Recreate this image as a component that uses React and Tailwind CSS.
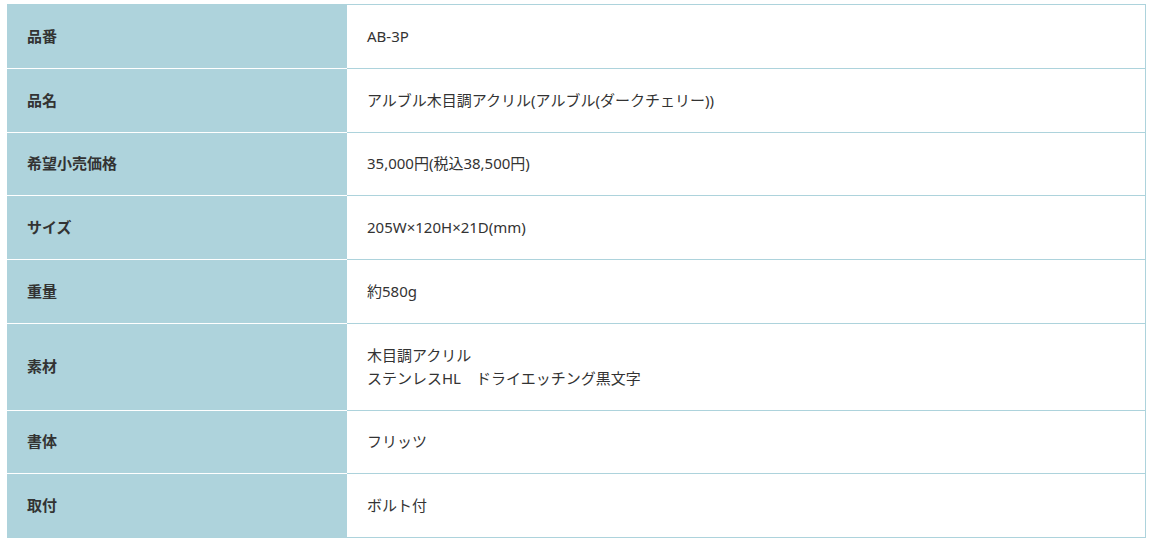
import React from "react";

const rows = [
    { label: "品番", value: ["AB-3P"] },
    { label: "品名", value: ["アルブル木目調アクリル(アルブル(ダークチェリー))"] },
    { label: "希望小売価格", value: ["35,000円(税込38,500円)"] },
    { label: "サイズ", value: ["205W×120H×21D(mm)"] },
    { label: "重量", value: ["約580g"] },
    { label: "素材", value: ["木目調アクリル", "ステンレスHL　ドライエッチング黒文字"] },
    { label: "書体", value: ["フリッツ"] },
    { label: "取付", value: ["ボルト付"] },
];

export default function App() {
    return (
        <div
            className="bg-white min-h-[543px] pt-[4px] pl-[7px] text-[15px] text-[#333]"
            style={{ fontFamily: '"Noto Sans", "Noto Sans CJK JP", sans-serif' }}
        >
            <div className="w-[1139px] border-t border-[#add3dc]">
                {rows.map((r, i) => (
                    <div key={r.label} className="flex">
                        <div
                            className={
                                "w-[340px] shrink-0 bg-[#aed3dc] px-5 py-[19.875px] leading-[23px] font-bold flex items-center " +
                                (i === rows.length - 1 ? "border-b border-[#add3dc]" : "border-b border-white")
                            }
                        >
                            {r.label}
                        </div>
                        <div className="flex-1 px-5 py-[19.875px] leading-[23px] border-b border-r border-[#add3dc]">
                            {r.value.map((v) => (
                                <div key={v} className="whitespace-pre">{v}</div>
                            ))}
                        </div>
                    </div>
                ))}
            </div>
        </div>
    );
}
